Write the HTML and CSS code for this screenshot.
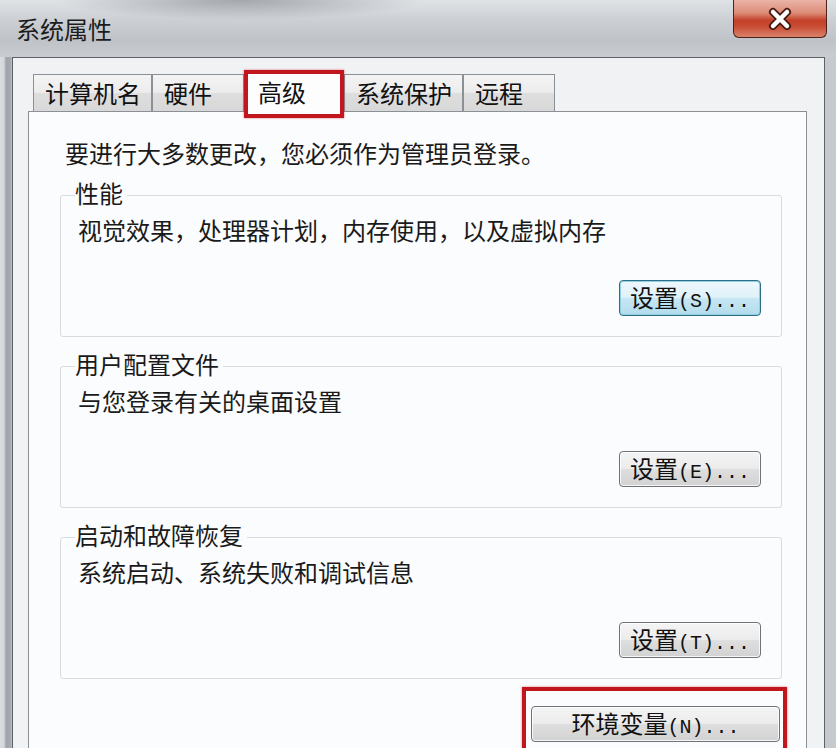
FILE: index.html
```html
<!DOCTYPE html>
<html lang="zh-CN">
<head>
    <meta charset="UTF-8">
    <meta name="viewport" content="width=device-width, initial-scale=1.0">
    <title>系统属性</title>
    <link rel="stylesheet" href="styles.css">
</head>
<body>
    <div class="window">
        <div class="titlebar">
            <span class="title">系统属性</span>
            <button class="close" type="button" aria-label="关闭">
                <svg width="30" height="24" viewBox="0 0 30 24">
                    <path d="M8 5 L22 19 M22 5 L8 19" stroke="#4a1a12" stroke-width="8" stroke-linecap="round"/>
                    <path d="M8 5 L22 19 M22 5 L8 19" stroke="#ffffff" stroke-width="4.5" stroke-linecap="round"/>
                </svg>
            </button>
        </div>

        <div class="client">
            <div class="tabs">
                <div class="tab">计算机名</div>
                <div class="tab">硬件</div>
                <div class="tab selected">高级</div>
                <div class="tab">系统保护</div>
                <div class="tab">远程</div>
            </div>

            <div class="panel">
                <p class="note">要进行大多数更改，您必须作为管理员登录。</p>

                <div class="group">
                    <div class="group-title">性能</div>
                    <p class="group-text">视觉效果，处理器计划，内存使用，以及虚拟内存</p>
                    <div class="group-actions">
                        <button class="btn default" type="button">设置<span class="key">(S)...</span></button>
                    </div>
                </div>

                <div class="group">
                    <div class="group-title">用户配置文件</div>
                    <p class="group-text">与您登录有关的桌面设置</p>
                    <div class="group-actions">
                        <button class="btn" type="button">设置<span class="key">(E)...</span></button>
                    </div>
                </div>

                <div class="group">
                    <div class="group-title">启动和故障恢复</div>
                    <p class="group-text">系统启动、系统失败和调试信息</p>
                    <div class="group-actions">
                        <button class="btn" type="button">设置<span class="key">(T)...</span></button>
                    </div>
                </div>

                <div class="env-row">
                    <div class="highlight">
                        <button class="btn wide" type="button">环境变量<span class="key">(N)...</span></button>
                    </div>
                </div>
            </div>
        </div>
    </div>
</body>
</html>
```

FILE: styles.css
```css
/* styles.css */
body {
    margin: 0;
    width: 836px;
    height: 748px;
    overflow: hidden;
    font-family: "Noto Sans CJK SC", "Noto Sans", sans-serif;
    color: #1a1a1a;
    background: linear-gradient(90deg, #dadde0 0, #d4d7da 4px, #9fa4aa 6px, #a7abb1 11px, #c6c9cd 12px);
}

.window {
    display: flex;
    flex-direction: column;
    height: 748px;
}

.titlebar {
    height: 57px;
    display: flex;
    justify-content: space-between;
    align-items: flex-start;
    background:
        radial-gradient(ellipse 180px 20px at 240px 0, rgba(90, 96, 104, 0.45), rgba(90, 96, 104, 0)),
        linear-gradient(180deg, #dfe2e5 0, #ccd0d4 35%, #bfc3c8 70%, #c9ccd0 100%);
}

.title {
    padding-left: 16px;
    line-height: 57px;
    font-size: 24px;
    color: #1c1c1c;
}

.close {
    width: 94px;
    height: 38px;
    margin-right: 9px;
    padding: 0;
    border: 1px solid #4f2219;
    border-top: none;
    border-radius: 0 0 6px 6px;
    background: linear-gradient(180deg, #eab4a6 0, #dc8c78 35%, #c3412a 55%, #c84a31 70%, #d9826b 100%);
    display: flex;
    justify-content: center;
    align-items: center;
}

.client {
    flex: 1;
    margin: 0 11px 0 12px;
    padding: 0 17px 0 15px;
    border: 1px solid #5c6168;
    border-bottom: none;
    background: #f1f2f3;
    display: flex;
    flex-direction: column;
}

.tabs {
    display: flex;
    align-items: flex-end;
    padding-top: 12px;
    margin-left: 5px;
}

.tab {
    box-sizing: border-box;
    min-width: 92px;
    height: 37px;
    padding: 0 10px 0 11px;
    line-height: 36px;
    font-size: 24px;
    color: #111;
    border: 1px solid #8b9097;
    border-bottom: none;
    background: linear-gradient(180deg, #f4f4f4 0, #ebebeb 50%, #dedede 51%, #d8d8d8 100%);
}

.tab.selected {
    position: relative;
    z-index: 1;
    min-width: 100px;
    height: 48px;
    margin-bottom: -7px;
    padding: 0 10px 4px 10px;
    border: 4px solid #c1161e;
    box-shadow: 0 0 2px rgba(193, 22, 30, 0.6);
    background: #fdfdfd;
}

.panel {
    flex: 1;
    min-height: 0;
    padding: 26px 24px 0 31px;
    border: 1px solid #8b9097;
    border-bottom: none;
    background: #fbfcfd;
}

.note {
    margin: 0 0 27px 5px;
    font-size: 24px;
    line-height: 30px;
}

.group {
    margin-bottom: 29px;
    padding: 0 20px 20px 14px;
    border: 1px solid #d5dde3;
    border-radius: 3px;
}

.group-title {
    width: fit-content;
    margin-top: -18px;
    padding-right: 4px;
    font-size: 24px;
    line-height: 30px;
    background: #fbfcfd;
}

.group-text {
    margin: 7px 0 0 3px;
    font-size: 24px;
    line-height: 30px;
}

.group-actions {
    display: flex;
    justify-content: flex-end;
    margin-top: 35px;
}

.btn {
    box-sizing: border-box;
    width: 142px;
    height: 36px;
    padding: 0;
    border: 1px solid #6f7377;
    border-radius: 4px;
    font-family: "Noto Sans CJK SC", sans-serif;
    font-size: 24px;
    line-height: 32px;
    color: #111;
    background: linear-gradient(180deg, #f4f4f4 0, #ececec 48%, #dedede 52%, #d2d2d2 100%);
    box-shadow: inset 0 0 0 1px rgba(255, 255, 255, 0.8);
}

.btn.default {
    border-color: #2f6f86;
    background: linear-gradient(180deg, #eef8fc 0, #dff1f9 48%, #c6e6f3 52%, #b3dcec 100%);
    box-shadow: inset 0 0 0 1px #8fd0e6;
}

.btn.wide {
    width: 249px;
}

.key {
    font-family: "Liberation Mono", monospace;
    font-size: 20px;
}

.env-row {
    display: flex;
    justify-content: flex-end;
    margin-top: -21px;
    margin-right: -5px;
}

.highlight {
    padding: 15px 3px 30px 5px;
    border: 4px solid #c1161e;
    box-shadow: 0 0 2px rgba(193, 22, 30, 0.6);
}
```
